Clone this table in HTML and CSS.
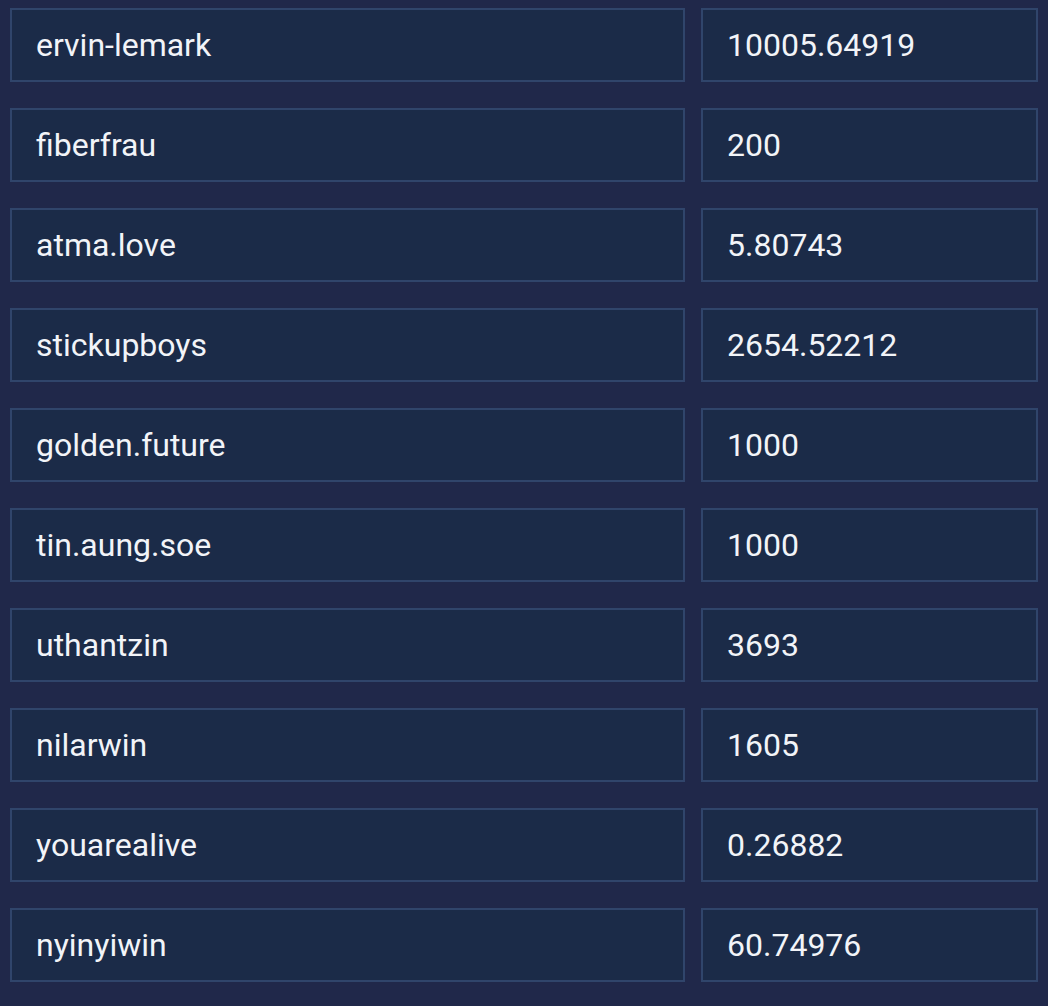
FILE: index.html
```html
<!DOCTYPE html>
<html>
<head>
<meta charset="utf-8">
<link rel="stylesheet" href="styles.css">
</head>
<body>
<div class="table">
  <div class="cell">ervin-lemark</div><div class="cell">10005.64919</div>
  <div class="cell">fiberfrau</div><div class="cell">200</div>
  <div class="cell">atma.love</div><div class="cell">5.80743</div>
  <div class="cell">stickupboys</div><div class="cell">2654.52212</div>
  <div class="cell">golden.future</div><div class="cell">1000</div>
  <div class="cell">tin.aung.soe</div><div class="cell">1000</div>
  <div class="cell">uthantzin</div><div class="cell">3693</div>
  <div class="cell">nilarwin</div><div class="cell">1605</div>
  <div class="cell">youarealive</div><div class="cell">0.26882</div>
  <div class="cell">nyinyiwin</div><div class="cell">60.74976</div>
</div>
</body>
</html>
```
FILE: styles.css
```css
html, body {
  margin: 0;
  background: #20284a;
}
.table {
  display: grid;
  grid-template-columns: 675px 337px;
  column-gap: 16px;
  row-gap: 26px;
  padding: 8px 10px;
  font-family: Roboto, "Liberation Sans", sans-serif;
  font-size: 32px;
  color: #f2f4f8;
}
.cell {
  box-sizing: border-box;
  height: 74px;
  display: flex;
  align-items: center;
  padding: 0 0 0 24px;
  background: #1b2b48;
  border: 2px solid #30456b;
}
```
